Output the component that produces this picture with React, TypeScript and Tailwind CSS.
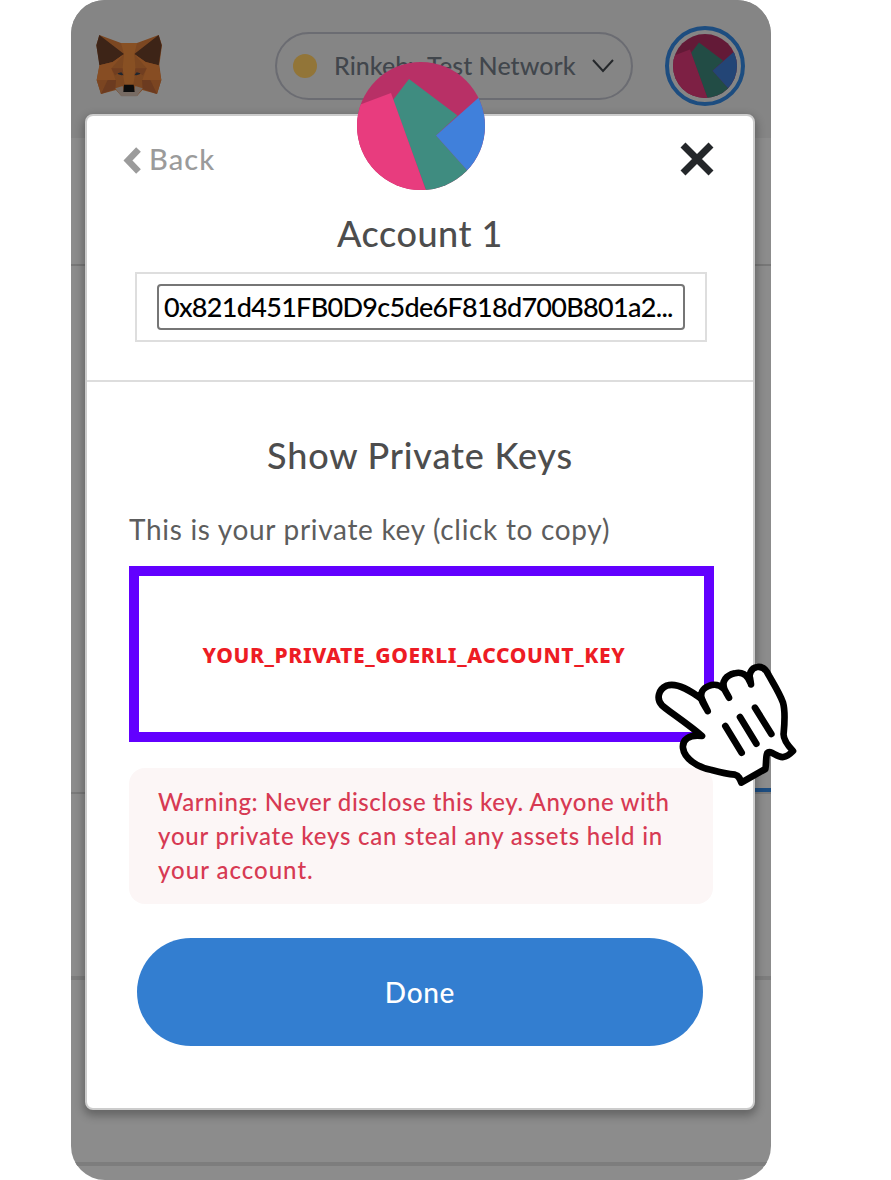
import React from 'react';

function Jazz({ className }: { className: string }) {
  return (
    <svg className={className} viewBox="0 0 128 128">
      <defs><clipPath id="disc"><circle cx="64" cy="64" r="64" /></clipPath></defs>
      <g clipPath="url(#disc)">
        <rect width="128" height="128" fill="#b83066" />
        <path d="M52 17 100.500 53.500 79 73.500 110 108 128 128H69L36 38Z" fill="#3f8c80" />
        <path d="M-2 44.500 34 31 69.500 130H-2Z" fill="#e83c7e" />
        <path d="M79 73.500 128 30V128L109 107Z" fill="#4080db" />
      </g>
    </svg>
  );
}

function Fox() {
  return (
    <svg className="h-[62px] w-[66px]" viewBox="0 0 198 186">
      <path d="M10 0 75 24H123L188 0 198 31 190 90 196 135 183 177 139 165 123 183H76L60 165 15 177 2 135 11 90 1 31Z" fill="#7c4721" />
      <path d="M10 0 1 31 6 64 10 91 50 81 84 57Z" fill="#3d2417" />
      <path d="M188 0 197 31 192 64 188 91 149 81 115 57Z" fill="#3d2417" />
      <path d="M75 24 84 57 79 107 86 149H112L119 107 115 57 123 24Z" fill="#885023" />
      <path d="M10 91 2 135H59L46 100 84 57 50 81ZM188 91 196 135H139L152 100 115 57 149 81Z" fill="#874d23" />
      <path d="M2 135H35L15 177ZM196 135H163L183 177Z" fill="#7b4521" />
      <path d="M35 135H60L58 162 15 177ZM163 135H138L140 162 183 177Z" fill="#6c3b20" />
      <path d="M46 100H80L83 123 65 116 57 121ZM152 100H118L115 123 133 116 141 121Z" fill="#713e20" />
      <path d="M65 115 76 112 82 119 77 121 67 118ZM133 115 122 112 116 119 121 121 131 118Z" fill="#1f2730" />
      <path d="M58 160 80 153 84 169H114L118 153 140 160 122 184H76Z" fill="#776b63" />
      <path d="M84 149H113L116 171H82Z" fill="#0c0c0c" />
    </svg>
  );
}

function Pointer() {
  return (
    <svg className="absolute left-[654px] top-[662px] h-[126px] w-[144px]" viewBox="0 0 432 378" fill="none" stroke="#000" strokeWidth="20" strokeLinecap="round" strokeLinejoin="round">
      <path fill="#fff" d="M144 112C112 88 70 60 38 71C13 82 6 111 24 130C34 141 100 184 144 222C105 217 84 233 87 258C91 290 132 317 173 324C195 330 220 336 243 338C255 341 258 350 262 362L334 321C338 303 334 285 340 273C350 262 368 288 388 285C402 283 410 274 417 267C402 251 386 231 389 213C391 191 395 150 387 122C378 96 359 66 345 41C337 22 325 13 310 15C290 17 283 39 288 60C279 38 263 28 242 34C216 40 203 58 209 80C198 69 180 65 164 72C146 79 137 94 144 112Z" />
      <path d="M144 112 161 147M141 106C143 121 153 132 161 147M208 69C209 84 218 92 225 107M288 48 291 67" />
      <path d="M214 192 263 272M258 165 307 245M303 137 352 216" />
    </svg>
  );
}

export default function App() {
  return (
    <div className="relative h-[1180px] w-[891px] overflow-hidden bg-white font-['Lato',sans-serif]">
      <div className="relative ml-[71px] h-[1180px] w-[700px] overflow-hidden rounded-[34px] bg-[#8c8c8c]">
        <header className="flex h-[138px] items-start bg-[#858585] pl-[25px] pt-[26px]">
          <div className="pt-[9px]"><Fox /></div>
          <div className="ml-[113px] mt-[6px] flex h-[68px] w-[358px] items-center rounded-full border-2 border-[#6b6c72] pl-4">
            <div className="h-6 w-6 rounded-full bg-[#927538]" />
            <span className="ml-[17px] w-[242px] whitespace-nowrap text-[25px] font-medium tracking-[0.05px] text-[#41464c]">Rinkeby Test Network</span>
            <svg className="ml-[16px] h-[14px] w-[22px]" viewBox="0 0 22 14" fill="none" stroke="#25282b" strokeWidth="2"><path d="m1 1 10 11L21 1" /></svg>
          </div>
          <div className="ml-[32px] flex h-20 w-20 items-center justify-center rounded-full border-4 border-[#1d4d80]">
            <Jazz className="h-16 w-16 brightness-[.54]" />
          </div>
        </header>
        <div className="h-[126px]" />
        <div className="h-[2px] bg-[#777]" />
        <div className="h-[522px]" />
        <div className="flex h-1 justify-end"><div className="h-1 w-[350px] bg-[#1d4d80]" /></div>
        <div className="h-[2px] bg-[#7a7a7a]" />
        <div className="h-[182px]" />
        <div className="h-1 bg-[#7d7d7d]" />
        <div className="h-[182px]" />
        <div className="h-1 bg-[#7d7d7d]" />
      </div>

      <main className="absolute left-[85px] top-[114px] flex h-[996px] w-[670px] flex-col rounded-[8px] border-2 border-[#ccc] bg-white shadow-[0_4px_8px_2px_rgba(0,0,0,.28)]">
        <section className="relative flex h-[266px] flex-col items-center border-b-2 border-[#ddd]">
          <Jazz className="absolute left-[270px] top-[-54px] h-32 w-32" />
          <div className="flex h-[86px] w-full items-center justify-between pl-[36px] pr-[39px]">
            <div className="flex items-center text-[29px] font-medium tracking-[1.1px] text-[#9b9b9b]">
              <svg className="mr-[8px] mt-[3px] h-[27px] w-[18px]" viewBox="0 0 18 27" fill="none" stroke="currentColor" strokeWidth="6.500"><path d="M15.500 2.500 5 13.500 15.500 24.500" /></svg>
              <span>Back</span>
            </div>
            <svg className="h-[34px] w-[34px]" viewBox="0 0 34 34" stroke="#24272a" strokeWidth="7"><path d="m3 3 28 28M31 3 3 31" /></svg>
          </div>
          <h1 className="mt-[8px] h-[62px] text-[36px] font-medium leading-[46px] tracking-[0.5px] text-[#4d4d4d]">Account 1</h1>
          <div className="ml-[2px] flex h-[70px] w-[572px] items-center justify-center border-2 border-[#dedede]">
            <div className="flex h-[46px] w-[528px] items-center rounded-[4px] border-2 border-[#767676] px-[5px] text-[27px] font-medium tracking-[-0.7px] text-black"><span className="whitespace-nowrap">0x821d451FB0D9c5de6F818d700B801a2...</span></div>
          </div>
        </section>
        <section className="flex flex-col px-[42px] pt-[49px]">
          <h2 className="text-center text-[36px] font-medium leading-[48px] tracking-[0.8px] text-[#4d4d4d]">Show Private Keys</h2>
          <p className="mt-[30px] h-[57px] whitespace-nowrap text-[28px] leading-[40px] tracking-[0.69px] text-[#5d5d5d]">This is your private key (click to copy)</p>
          <div className="flex h-[176px] w-[585px] items-center justify-center border-[10px] border-[#6200ff] pr-[15px] pt-[4px] font-['Noto_Sans',sans-serif] text-[21px] font-extrabold tracking-[0.6px] text-[#ed1c24]"><span className="whitespace-nowrap">YOUR_PRIVATE_GOERLI_ACCOUNT_KEY</span></div>
          <div className="mt-[26px] h-[136px] w-[584px] rounded-[16px] bg-[#fcf6f6] pl-[29px] pt-[17px] text-[24px] font-medium leading-[34px] text-[#d73a53]">
            <p className="whitespace-nowrap tracking-[0.57px]">Warning: Never disclose this key. Anyone with</p>
            <p className="whitespace-nowrap tracking-[0.79px]">your private keys can steal any assets held in</p>
            <p className="whitespace-nowrap tracking-[1px]">your account.</p>
          </div>
          <button className="ml-[8px] mt-[34px] h-[108px] w-[566px] rounded-full bg-[#337ed0] text-[28px] font-medium tracking-[0.7px] text-white">Done</button>
        </section>
      </main>
      <Pointer />
    </div>
  );
}
